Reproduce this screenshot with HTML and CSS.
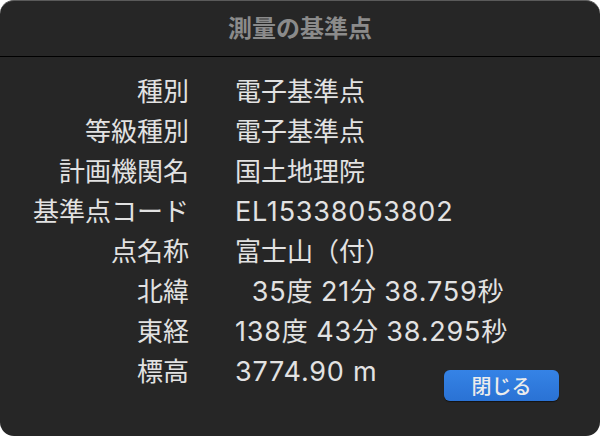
FILE: index.html
```html
<!DOCTYPE html>
<html lang="ja">
<head>
<meta charset="utf-8">
<link rel="stylesheet" href="styles.css">
</head>
<body>
<div class="dialog">
  <div class="title">測量の基準点</div>
  <div class="content">
    <div class="grid">
      <div class="label">種別</div><div class="value">電子基準点</div>
      <div class="label">等級種別</div><div class="value">電子基準点</div>
      <div class="label">計画機関名</div><div class="value">国土地理院</div>
      <div class="label">基準点コード</div><div class="value"><span class="lat">EL15338053802</span></div>
      <div class="label">点名称</div><div class="value">富士山（付）</div>
      <div class="label">北緯</div><div class="value"><span class="lat">&nbsp;&nbsp;35</span>度<span class="lat"> 21</span>分<span class="lat"> 38.759</span>秒</div>
      <div class="label">東経</div><div class="value"><span class="lat">138</span>度<span class="lat"> 43</span>分<span class="lat"> 38.295</span>秒</div>
      <div class="label">標高</div><div class="value"><span class="lat">3774.90 m</span></div>
    </div>
    <div class="footer">
      <button class="btn">閉じる</button>
    </div>
  </div>
</div>
</body>
</html>
```
FILE: styles.css
```css
html, body {
  margin: 0;
  padding: 0;
  background: #ffffff;
}
body {
  width: 600px;
  height: 436px;
  overflow: hidden;
  font-family: "Noto Sans CJK JP", "Noto Sans", sans-serif;
}
.dialog {
  width: 600px;
  height: 436px;
  box-sizing: border-box;
  background: #262626;
  border-radius: 14px;
  border-top: 1px solid #5a5a5a;
  overflow: hidden;
  display: flex;
  flex-direction: column;
}
.title {
  height: 55px;
  line-height: 52px;
  text-align: center;
  color: #8b8b8b;
  font-weight: bold;
  font-size: 24px;
  border-bottom: 1px solid #000000;
}
.content {
  padding-top: 13px;
}
.grid {
  display: grid;
  grid-template-columns: 189px 1fr;
  column-gap: 46px;
  grid-auto-rows: 40px;
  color: #e2e2e2;
  font-size: 26px;
  line-height: 40px;
}
.label {
  text-align: right;
  white-space: nowrap;
}
.value {
  white-space: nowrap;
}
.lat {
  font-family: "Inter", "Noto Sans CJK JP", sans-serif;
  font-size: 27px;
  letter-spacing: 0.8px;
}
.footer {
  display: flex;
  justify-content: flex-end;
  padding-right: 41px;
  margin-top: -20px;
}
.btn {
  width: 115px;
  height: 31px;
  border: none;
  border-radius: 6px;
  background: linear-gradient(#3583e6, #2a72d4);
  box-shadow: 0 1px 1px rgba(0,0,0,0.5);
  color: #ececec;
  font-family: "Noto Sans CJK JP", sans-serif;
  font-weight: 500;
  font-size: 20px;
  line-height: 31px;
  padding: 0;
}
```
